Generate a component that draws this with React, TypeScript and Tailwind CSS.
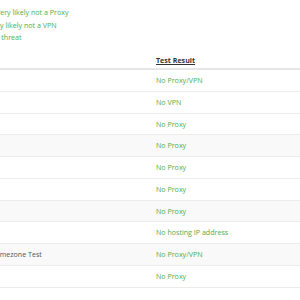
const rows = [
  { name: '', result: 'No Proxy/VPN' },
  { name: '', result: 'No VPN' },
  { name: '', result: 'No Proxy' },
  { name: '', result: 'No Proxy', shaded: true },
  { name: '', result: 'No Proxy' },
  { name: '', result: 'No Proxy' },
  { name: '', result: 'No Proxy', shaded: true },
  { name: '', result: 'No hosting IP address' },
  { name: 'Timezone Test', result: 'No Proxy/VPN', shaded: true },
  { name: '', result: 'No Proxy' },
]

export default function App() {
  return (
    <div className="h-[300px] w-[300px] overflow-hidden bg-white pt-[6px] font-['Open_Sans',sans-serif] text-[7.1px]">
      <div className="leading-[12.5px] text-[#4cae4c] whitespace-nowrap">
        <div className="ml-[-4px]">Very likely not a Proxy</div>
        <div className="ml-[-11px]">Very likely not a VPN</div>
        <div className="ml-[-14px]">Low threat</div>
      </div>

      <div className="mt-[5.5px] w-[330px] ml-[-6px]">
        <div className="flex border-b-2 border-[#e6e6e6] pt-[5px] pb-[2px] leading-[12px]">
          <div className="w-[162px]" />
          <div className="font-bold text-[#333] underline">Test Result</div>
        </div>
        {rows.map((row, i) => (
          <div
            key={i}
            className={`flex h-[21.75px] items-center border-b border-[#ececec] ${row.shaded ? 'bg-[#f9f9f9]' : ''}`}
          >
            <div className="w-[162px] text-[#555]">{row.name}</div>
            <div className="text-[#4cae4c]">{row.result}</div>
          </div>
        ))}
      </div>
    </div>
  )
}
